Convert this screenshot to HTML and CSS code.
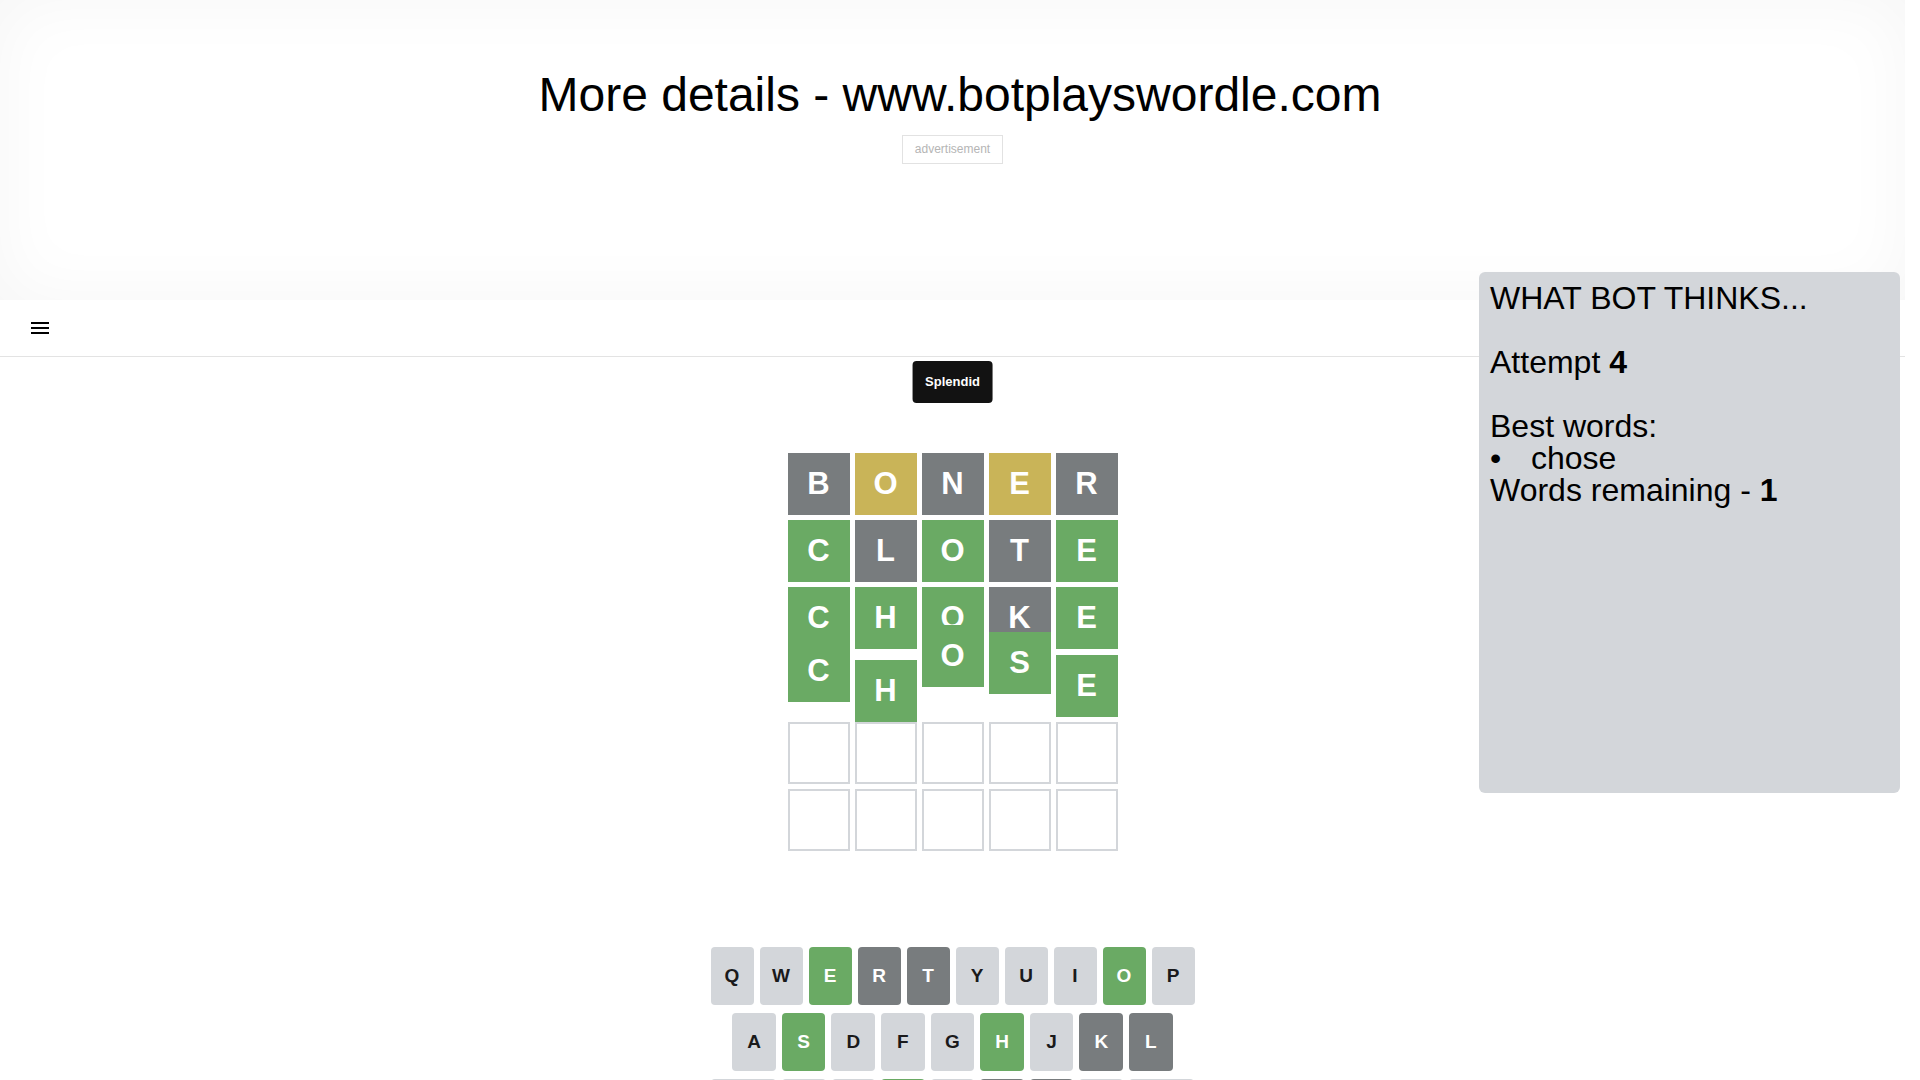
FILE: index.html
```html
<!DOCTYPE html>
<html lang="en">
<head>
    <meta charset="UTF-8">
    <meta name="viewport" content="width=device-width, initial-scale=1.0">
    <title>Bot plays Wordle</title>
    <link rel="stylesheet" href="styles.css">
</head>
<body>
    <div class="top-band">
        <h1 class="site-title">More details - www.botplayswordle.com</h1>
        <div class="ad-label">advertisement</div>
    </div>

    <div class="nav">
        <button class="menu-btn" aria-label="Menu">
            <svg width="24" height="24" viewBox="0 0 24 24"><path d="M3 18h18v-2H3v2zm0-5h18v-2H3v2zm0-7v2h18V6H3z"/></svg>
        </button>
    </div>

    <div class="game">
        <div class="toast">Splendid</div>

        <div class="board-container">
            <div class="board">
                <div class="row">
                    <div class="tile absent">B</div>
                    <div class="tile present">O</div>
                    <div class="tile absent">N</div>
                    <div class="tile present">E</div>
                    <div class="tile absent">R</div>
                </div>
                <div class="row">
                    <div class="tile correct">C</div>
                    <div class="tile absent">L</div>
                    <div class="tile correct">O</div>
                    <div class="tile absent">T</div>
                    <div class="tile correct">E</div>
                </div>
                <div class="row">
                    <div class="tile correct">C</div>
                    <div class="tile correct">H</div>
                    <div class="tile correct">O</div>
                    <div class="tile absent">K</div>
                    <div class="tile correct">E</div>
                </div>
                <!-- winning row, caught mid-bounce -->
                <div class="row bounce">
                    <div class="tile correct">C</div>
                    <div class="tile correct">H</div>
                    <div class="tile correct">O</div>
                    <div class="tile correct">S</div>
                    <div class="tile correct">E</div>
                </div>
                <div class="row">
                    <div class="tile"></div>
                    <div class="tile"></div>
                    <div class="tile"></div>
                    <div class="tile"></div>
                    <div class="tile"></div>
                </div>
                <div class="row">
                    <div class="tile"></div>
                    <div class="tile"></div>
                    <div class="tile"></div>
                    <div class="tile"></div>
                    <div class="tile"></div>
                </div>
            </div>
        </div>

        <div class="keyboard">
            <div class="kb-row">
                <button class="key">q</button>
                <button class="key">w</button>
                <button class="key correct">e</button>
                <button class="key absent">r</button>
                <button class="key absent">t</button>
                <button class="key">y</button>
                <button class="key">u</button>
                <button class="key">i</button>
                <button class="key correct">o</button>
                <button class="key">p</button>
            </div>
            <div class="kb-row">
                <div class="half"></div>
                <button class="key">a</button>
                <button class="key correct">s</button>
                <button class="key">d</button>
                <button class="key">f</button>
                <button class="key">g</button>
                <button class="key correct">h</button>
                <button class="key">j</button>
                <button class="key absent">k</button>
                <button class="key absent">l</button>
                <div class="half"></div>
            </div>
            <div class="kb-row">
                <button class="key wide">enter</button>
                <button class="key">z</button>
                <button class="key">x</button>
                <button class="key correct">c</button>
                <button class="key">v</button>
                <button class="key absent">b</button>
                <button class="key absent">n</button>
                <button class="key">m</button>
                <button class="key wide" aria-label="backspace">
                    <svg width="24" height="24" viewBox="0 0 24 24"><path d="M22 3H7c-.69 0-1.23.35-1.59.88L0 12l5.41 8.11c.36.53.9.89 1.59.89h15c1.1 0 2-.9 2-2V5c0-1.1-.9-2-2-2zm0 16H7.07L2.4 12l4.66-7H22v14zm-11.59-2L14 13.41 17.59 17 19 15.59 15.41 12 19 8.41 17.59 7 14 10.59 10.41 7 9 8.41 12.59 12 9 15.59z"/></svg>
                </button>
            </div>
        </div>
    </div>

    <div class="bot-panel">
        WHAT BOT THINKS...<br><br>
        Attempt <b>4</b><br><br>
        Best words:
        <ul>
            <li>chose</li>
        </ul>
        Words remaining - <b>1</b>
    </div>
</body>
</html>
```

FILE: styles.css
```css
/* General */
body {
    position: relative;
    margin: 0 15px 0 0;
    font-family: "Liberation Sans", Arial, sans-serif;
    background: #fff;
    color: #000;
}

/* Top banner */
.top-band {
    height: 300px;
    box-sizing: border-box;
    padding-top: 67px;
    box-shadow: inset 0 0 70px rgba(0, 0, 0, 0.04);
}

.site-title {
    width: 100vw;
    margin: 0;
    font-size: 48px;
    font-weight: normal;
    line-height: 55px;
    text-align: center;
}

.ad-label {
    display: table;
    margin: 13px auto 0;
    padding: 6px 12px;
    border: 1px solid #e2e2e2;
    font-size: 12px;
    line-height: 15px;
    color: #b5b5b5;
}

/* Nav */
.nav {
    height: 56px;
    display: flex;
    align-items: center;
    padding-left: 28px;
    border-bottom: 1px solid #e3e3e3;
}

.menu-btn {
    background: none;
    border: none;
    padding: 0;
    height: 24px;
    cursor: pointer;
}

/* Game */
.game {
    position: relative;
    width: 500px;
    height: 1047px;
    margin: 0 auto;
    display: flex;
    flex-direction: column;
}

.toast {
    position: absolute;
    top: 4px;
    left: 50%;
    transform: translateX(-50%);
    padding: 13px 13px;
    background: #121212;
    color: #fff;
    border-radius: 4px;
    font-size: 13px;
    font-weight: bold;
    line-height: 16px;
    z-index: 5;
}

.board-container {
    height: 590px;
    display: flex;
    justify-content: center;
    align-items: center;
}

.board {
    display: grid;
    row-gap: 5.4px;
}

.row {
    display: grid;
    grid-template-columns: repeat(5, 62px);
    column-gap: 5px;
}

.tile {
    width: 62px;
    height: 62px;
    box-sizing: border-box;
    border: 2px solid #d3d6da;
    background: #fff;
    display: flex;
    justify-content: center;
    align-items: center;
    font-size: 31px;
    font-weight: bold;
    color: #fff;
    text-transform: uppercase;
}

.tile.correct {
    background: #6aaa64;
    border-color: #6aaa64;
}

.tile.present {
    background: #c9b458;
    border-color: #c9b458;
}

.tile.absent {
    background: #787c7e;
    border-color: #787c7e;
}

.row.bounce .tile:nth-child(1) { transform: translateY(-15px); }
.row.bounce .tile:nth-child(2) { transform: translateY(5px); }
.row.bounce .tile:nth-child(3) { transform: translateY(-30px); }
.row.bounce .tile:nth-child(4) { transform: translateY(-23px); }

/* Keyboard */
.keyboard {
    height: 200px;
    margin: 0 8px;
}

.kb-row {
    display: flex;
    margin-bottom: 8px;
}

.key {
    flex: 1;
    height: 58px;
    margin: 0 6px 0 0;
    padding: 0;
    border: 0;
    border-radius: 4px;
    background: #d3d6da;
    color: #1a1a1b;
    font-family: inherit;
    font-size: 19px;
    font-weight: bold;
    text-transform: uppercase;
    display: flex;
    justify-content: center;
    align-items: center;
    cursor: pointer;
}

.key:last-of-type {
    margin-right: 0;
}

.key.wide {
    flex: 1.5;
    font-size: 12px;
}

.key.correct {
    background: #6aaa64;
    color: #fff;
}

.key.absent {
    background: #787c7e;
    color: #fff;
}

.half {
    flex: 0.5;
}

/* Bot side panel */
.bot-panel {
    position: absolute;
    top: 272px;
    right: 5px;
    width: 421px;
    height: 521px;
    box-sizing: border-box;
    padding: 10px 11px;
    background: #d3d6da;
    border-radius: 6px;
    font-size: 32px;
    line-height: 32px;
}

.bot-panel ul {
    margin: 0;
    padding: 0;
    list-style: none;
}

.bot-panel li::before {
    content: "\2022";
    display: inline-block;
    width: 41px;
}
```
